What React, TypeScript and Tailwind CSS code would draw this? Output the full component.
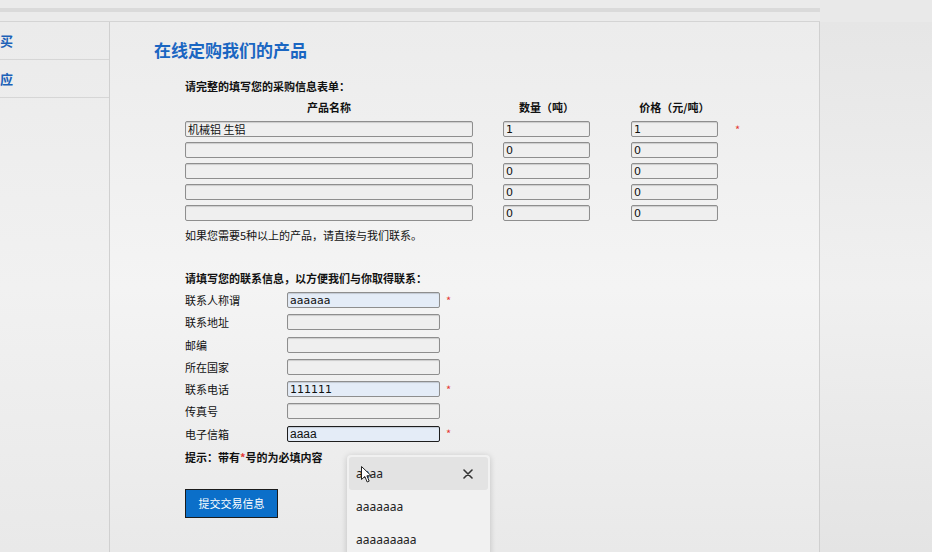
import React from "react";

type Product = { name: string; qty: string; price: string };

const products: Product[] = [
  { name: "机械铝 生铝", qty: "1", price: "1" },
  { name: "", qty: "0", price: "0" },
  { name: "", qty: "0", price: "0" },
  { name: "", qty: "0", price: "0" },
  { name: "", qty: "0", price: "0" },
];

type Contact = { label: string; value: string; required?: boolean; filled?: boolean; focused?: boolean };

const contacts: Contact[] = [
  { label: "联系人称谓", value: "aaaaaa", required: true, filled: true },
  { label: "联系地址", value: "" },
  { label: "邮编", value: "" },
  { label: "所在国家", value: "" },
  { label: "联系电话", value: "111111", required: true, filled: true },
  { label: "传真号", value: "" },
  { label: "电子信箱", value: "aaaa", required: true, filled: true, focused: true },
];

const suggestions = ["aaaa", "aaaaaaa", "aaaaaaaaa"];

function Field({ value, className }: { value: string; className: string }) {
  return (
    <input
      readOnly
      value={value}
      className={
        "box-border h-[16px] rounded-[2px] px-[2px] py-0 text-[11px] leading-[14px] text-[#111] outline-none shadow-[inset_0_1px_1px_rgba(0,0,0,0.15)] " +
        className
      }
    />
  );
}

function Star() {
  return <span className="block text-[11px] leading-[11px] text-[#e53935]">*</span>;
}

export default function App() {
  return (
    <div className="h-[552px] w-[932px] overflow-hidden bg-[#e7e7e7] font-['Noto_Sans_CJK_SC','Liberation_Sans',sans-serif] text-[#111]">
      {/* top strip */}
      <div className="flex h-[22px]">
        <div className="w-[820px] border-b border-[#d4d4d4] bg-[#ebebeb] pt-[8px]">
          <div className="h-[4px] bg-[#dadada]" />
        </div>
        <div className="flex-1 bg-[#e9e9e9]" />
      </div>

      <div className="flex h-[530px]">
        {/* sidebar */}
        <aside className="w-[110px] border-r border-[#d0d0d0] bg-linear-to-b from-[#ebebeb] via-[#f1f1f1] to-[#e9e9e9]">
          <div className="flex h-[38px] items-center border-b border-[#d6d6d6] text-[13px] font-bold text-[#1c62b8]">
            买
          </div>
          <div className="flex h-[38px] items-center border-b border-[#d6d6d6] text-[13px] font-bold text-[#1c62b8]">
            应
          </div>
        </aside>

        {/* main panel */}
        <main className="relative w-[710px] border-r border-[#d0d0d0] bg-linear-to-b from-[#ececec] via-[#f4f4f4] to-[#e9e9e9] pt-[16px]">
          <h1 className="ml-[44px] text-[17px] font-bold leading-[24px] text-[#1a66c2]">在线定购我们的产品</h1>

          <div className="ml-[75px]">
            <p className="mt-[17px] text-[11px] font-bold leading-[14px]">请完整的填写您的采购信息表单：</p>

            <div className="mt-[7px] flex text-[11px] font-bold leading-[14px]">
              <div className="w-[288px] text-center">产品名称</div>
              <div className="ml-[30px] w-[87px] text-center">数量（吨）</div>
              <div className="ml-[41px] w-[87px] text-center">价格（元/吨）</div>
            </div>

            <div className="mt-[7px] flex flex-col gap-[5px]">
              {products.map((p, i) => (
                <div key={i} className="flex h-[16px] items-center leading-none">
                  <Field value={p.name} className="w-[288px] border border-[#8e8e8e] bg-[#efefef]" />
                  <Field value={p.qty} className="ml-[30px] w-[87px] border border-[#8e8e8e] bg-[#efefef] font-['DejaVu_Sans',sans-serif]" />
                  <Field value={p.price} className="ml-[41px] w-[87px] border border-[#8e8e8e] bg-[#efefef] font-['DejaVu_Sans',sans-serif]" />
                  {i === 0 ? (
                    <span className="ml-[17px]">
                      <Star />
                    </span>
                  ) : null}
                </div>
              ))}
            </div>

            <p className="mt-[7px] text-[11px] leading-[14px]">如果您需要5种以上的产品，请直接与我们联系。</p>

            <p className="mt-[29px] text-[11px] font-bold leading-[14px]">请填写您的联系信息，以方便我们与你取得联系：</p>

            <div className="mt-[7px] flex flex-col gap-[6.3px]">
              {contacts.map((c) => (
                <div key={c.label} className="flex h-[16px] items-center leading-none">
                  <label className="w-[102px] text-[11px] leading-[14px]">{c.label}</label>
                  <Field
                    value={c.value}
                    className={
                      "w-[153px] " +
                      (c.focused
                        ? "border-[1.5px] border-[#1e1e1e] bg-[#e4ecf7] font-['Liberation_Sans',sans-serif] text-[12px]"
                        : c.filled
                          ? "border border-[#8e8e8e] bg-[#e4ecf7] font-['DejaVu_Sans',sans-serif]"
                          : "border border-[#8e8e8e] bg-[#efefef]")
                    }
                  />
                  {c.required ? (
                    <span className="ml-[6px]">
                      <Star />
                    </span>
                  ) : null}
                </div>
              ))}
            </div>

            <p className="mt-[8px] text-[11px] font-bold leading-[14px]">
              提示：带有<span className="text-[#e53935]">*</span>号的为必填内容
            </p>

            <button className="mt-[25px] h-[29px] w-[93px] border border-[#1b1b1b] bg-[#0b6fc9] text-[11px] text-white">
              提交交易信息
            </button>
          </div>

          {/* autofill popup */}
          <div className="absolute left-[237px] top-[433px] w-[143px] rounded-[4px] bg-[#f1f1f1] p-[2px] shadow-[0_1px_6px_rgba(0,0,0,0.18)] font-['Noto_Sans','Liberation_Sans',sans-serif] text-[12px] text-[#222]">
            {suggestions.map((s, i) => (
              <div
                key={s}
                className={
                  "flex h-[33px] items-center justify-between rounded-[3px] px-[7px] " +
                  (i === 0 ? "bg-[#e3e3e3]" : "")
                }
              >
                <span>{s}</span>
                {i === 0 ? (
                  <svg width="10" height="10" viewBox="0 0 10 10" className="mr-[8px]">
                    <path d="M1 1 L9 9 M9 1 L1 9" stroke="#333" strokeWidth="1.6" strokeLinecap="round" />
                  </svg>
                ) : null}
              </div>
            ))}
            <svg width="11" height="17" viewBox="0 0 11 17" className="absolute left-[14px] top-[11px]">
              <path
                d="M0.5 0.5 L0.5 13.5 L3.8 10.5 L6.2 16 L8.2 15.1 L5.9 9.8 L10.2 9.8 Z"
                fill="#fff"
                stroke="#222"
                strokeWidth="1"
                strokeLinejoin="round"
              />
            </svg>
          </div>
        </main>

        <div className="flex-1 bg-linear-to-b from-[#e6e6e6] via-[#f0f0f0] to-[#e4e4e4]" />
      </div>
    </div>
  );
}
